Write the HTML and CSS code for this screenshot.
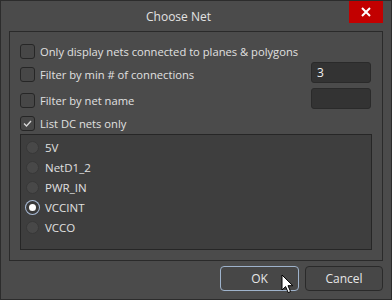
FILE: index.html
```html
<!DOCTYPE html>
<html lang="en">
<head>
    <meta charset="UTF-8">
    <title>Choose Net</title>
    <link rel="stylesheet" href="styles.css">
</head>
<body>
    <div class="dialog">
        <div class="titlebar">
            <div class="title">Choose Net</div>
            <div class="close-btn">
                <svg width="12" height="12" viewBox="0 0 12 12"><path d="M2 2 L10 10 M10 2 L2 10" stroke="#fff" stroke-width="2"/></svg>
            </div>
        </div>

        <div class="panel">
            <div class="row row-1">
                <span class="check"></span>
                <span class="label">Only display nets connected to planes &amp; polygons</span>
            </div>
            <div class="row row-2">
                <span class="check"></span>
                <span class="label">Filter by min # of connections</span>
                <input class="field" type="text" value="3">
            </div>
            <div class="row row-3">
                <span class="check"></span>
                <span class="label">Filter by net name</span>
                <input class="field" type="text" value="">
            </div>
            <div class="row row-4">
                <span class="check checked">
                    <svg width="11" height="11" viewBox="0 0 11 11"><path d="M2 5.5 L4.5 8 L9 3" fill="none" stroke="#d8d8d8" stroke-width="1.3"/></svg>
                </span>
                <span class="label">List DC nets only</span>
            </div>

            <div class="net-list">
                <div class="net"><span class="radio"></span>5V</div>
                <div class="net"><span class="radio"></span>NetD1_2</div>
                <div class="net"><span class="radio"></span>PWR_IN</div>
                <div class="net"><span class="radio selected"></span>VCCINT</div>
                <div class="net"><span class="radio"></span>VCCO</div>
            </div>
        </div>

        <div class="buttons">
            <button class="btn btn-ok">OK</button>
            <button class="btn">Cancel</button>
        </div>

        <svg class="cursor" width="13" height="20" viewBox="0 0 13 20">
            <path d="M1 1 L1 16 L4.6 12.6 L7.2 18.6 L9.6 17.6 L7 11.7 L11.8 11.7 Z" fill="#fff" stroke="#000" stroke-width="1"/>
        </svg>
    </div>
</body>
</html>
```

FILE: styles.css
```css
* {
    box-sizing: border-box;
}

body {
    margin: 0;
    background: #4b4b4b;
    font-family: "Open Sans", "Noto Sans", sans-serif;
    font-size: 11.2px;
    color: #e0e0e0;
}

.dialog {
    position: relative;
    width: 392px;
    height: 300px;
    background: #4b4b4b;
    border: 1px solid #2c2c2c;
}

.titlebar {
    position: relative;
    height: 30px;
    display: flex;
    align-items: center;
    justify-content: center;
    padding-right: 36px;
}

.title {
    font-size: 12px;
    color: #e2e2e2;
    margin-left: 1px;
}

.close-btn {
    position: absolute;
    top: 0;
    right: 8px;
    width: 34px;
    height: 22px;
    background: #c20000;
    display: flex;
    align-items: center;
    justify-content: center;
}

/* group box */
.panel {
    margin: 0 8px;
    border: 1px solid #2a2a2a;
    padding: 8px 10px 10px 10px;
}

.row {
    display: flex;
    align-items: center;
}

.row-1 { height: 22px; }
.row-2 { height: 24px; }
.row-3 { height: 28px; }
.row-4 { height: 18px; }

.check {
    width: 15px;
    height: 15px;
    border: 1px solid #262626;
    border-radius: 3px;
    background: #474747;
    margin-right: 5px;
    display: flex;
    align-items: center;
    justify-content: center;
    flex-shrink: 0;
}

.label {
    flex: 1;
}

.field {
    width: 60px;
    height: 21px;
    margin-right: 1px;
    background: #333333;
    border: 1px solid #2a2a2a;
    border-radius: 3px;
    color: #f0f0f0;
    font-family: inherit;
    font-size: 12px;
    padding: 0 5px;
    outline: none;
}

.row-2 .field {
    margin-top: -4px;
}

.row-3 .field {
    margin-top: -3px;
}

.net-list {
    margin-top: 2px;
    height: 116px;
    background: #3e3e3e;
    border: 1px solid #262626;
    padding: 2px 5px;
    font-size: 11.5px;
}

.net {
    height: 20px;
    display: flex;
    align-items: center;
}

.radio {
    width: 13px;
    height: 13px;
    border-radius: 50%;
    background: #484848;
    border: 1px solid #383838;
    margin-right: 6px;
    flex-shrink: 0;
}

.radio.selected {
    background: #ffffff;
    border: 3px solid #3a3a3a;
    box-shadow: 0 0 0 1px #a9bcd8;
}

.buttons {
    display: flex;
    justify-content: flex-end;
    gap: 6px;
    padding: 5px 8px 0 0;
}

.btn {
    width: 78px;
    height: 25px;
    background: #474747;
    border: 1px solid #2a2a2a;
    border-radius: 4px;
    color: #e6e6e6;
    font-family: inherit;
    font-size: 12px;
}

.btn-ok {
    width: 79px;
    border-color: #9fb3cc;
}

.cursor {
    position: absolute;
    left: 280px;
    top: 273px;
}
```
